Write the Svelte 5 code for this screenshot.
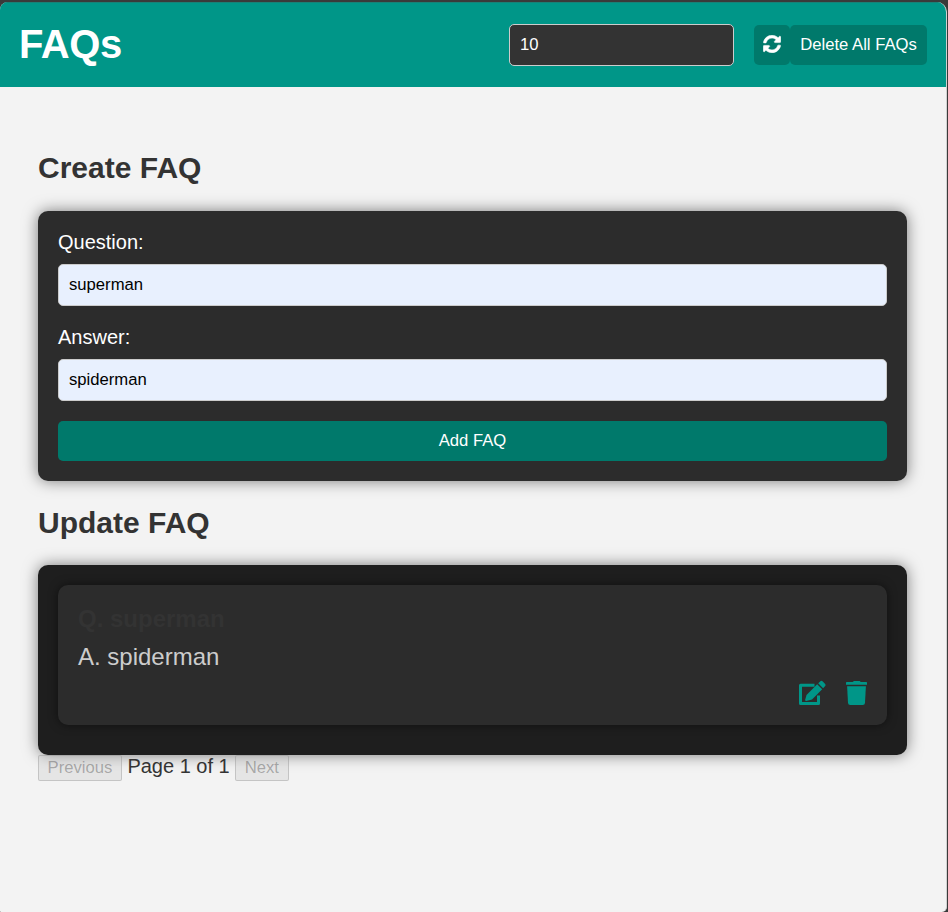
<script>
  let perPage = $state('10');
  let question = $state('superman');
  let answer = $state('spiderman');
  const faqs = [{ question: 'superman', answer: 'spiderman' }];
</script>

<div class="window">
  <header>
    <h1>FAQs</h1>
    <input class="limit" bind:value={perPage} aria-label="FAQs per page" />
    <button class="btn refresh" aria-label="Refresh">
      <svg width="18" height="18" viewBox="0 0 512 512" fill="currentColor" stroke="currentColor" stroke-width="16">
        <path d="M370.7 133.3C339.5 104 298.9 88 255.8 88c-77.5.1-144.3 53.2-162.8 126.9-1.3 5.4-6.1 9.1-11.7 9.1H24.1c-7.5 0-13.2-6.8-11.8-14.2C33.9 94.9 134.8 8 256 8c66.4 0 126.8 26.1 171.3 68.7L463 41C478.1 25.9 504 36.6 504 57.9V192c0 13.3-10.7 24-24 24H345.9c-21.4 0-32.1-25.9-17-41l41.8-41.7zM32 296h134.1c21.4 0 32.1 25.9 17 41l-41.8 41.8c31.3 29.3 71.8 45.3 114.9 45.3 77.4-.1 144.3-53.1 162.8-126.8 1.3-5.4 6.1-9.1 11.7-9.1h57.3c7.5 0 13.2 6.8 11.8 14.2C478.1 417.1 377.2 504 256 504c-66.4 0-126.8-26.1-171.3-68.7L49 471C33.9 486.1 8 475.4 8 454.1V320c0-13.3 10.7-24 24-24z" />
      </svg>
    </button>
    <button class="btn delete">Delete All FAQs</button>
  </header>

  <main>
    <h2>Create FAQ</h2>
    <section class="form">
      <label for="question">Question:</label>
      <input id="question" bind:value={question} />
      <label for="answer">Answer:</label>
      <input id="answer" bind:value={answer} />
      <button class="btn add">Add FAQ</button>
    </section>

    <h2>Update FAQ</h2>
    <section class="list">
      {#each faqs as faq}
        <article>
          <h3>Q. {faq.question}</h3>
          <p>A. {faq.answer}</p>
          <div class="actions">
            <svg width="28" height="26" viewBox="0 0 28 26">
              <path d="M16.5 5.3H2.5V23.5H20.5V15.5" fill="none" stroke="currentColor" stroke-width="3" stroke-linejoin="round" />
              <path d="M19.2 4.2L24.2 9.2L14 19.5L8.3 21Q7.1 21 7.1 20L8.5 14.9Z" fill="currentColor" />
              <path d="M20.2 3.3L22.4 1.2Q23.5.4 24.5 1.2L27.2 3.9Q28 5 27.2 6L25.1 8.2Z" fill="currentColor" />
            </svg>
            <svg width="21" height="26" viewBox="0 0 21 26" fill="currentColor">
              <path d="M.7 2H6.6L8 1H13.7L14.8 2H20.3Q21 2 21 2.7V4.8H0V2.7Q0 2 .7 2Z" />
              <path d="M1.1 6.3H19.9L19 22.7Q18.8 25 16.8 25H4.2Q2.2 25 2 22.7Z" />
            </svg>
          </div>
        </article>
      {/each}
    </section>

    <div class="pager">
      <button disabled>Previous</button>
      <span>Page 1 of 1</span>
      <button disabled>Next</button>
    </div>
  </main>
</div>

<style>
  :global(body) {
    background: #3a3a3a;
  }
  .window,
  .window * {
    box-sizing: border-box;
    font-family: 'Liberation Sans', Arial, sans-serif;
  }
  .window {
    width: 947px;
    height: 910px;
    margin-top: 2px;
    background: #f3f3f3;
    border-right: 1px solid #d2d2d2;
    border-radius: 8px 10px 5px 1px;
    overflow: hidden;
    color: #333;
  }
  svg {
    display: block;
  }
  header {
    display: flex;
    align-items: center;
    width: 947px;
    height: 85px;
    padding: 0 20px 0 19px;
    background: #009688;
    box-shadow: inset 0 1px #188177;
  }
  h1 {
    margin: 0 auto 0 0;
    padding-bottom: 2px;
    font-size: 40px;
    line-height: 46px;
    letter-spacing: -0.4px;
    color: #fff;
  }
  input {
    display: block;
    width: 100%;
    height: 42px;
    padding: 0 10px 1px;
    font-size: 16.67px;
    color: #000;
    background: #e8f0fe;
    border: 1px solid #ccc;
    border-radius: 5px;
    outline: none;
  }
  .limit {
    width: 225px;
    margin-right: 20px;
    padding-bottom: 0;
    color: #fff;
    background: #333;
  }
  .btn {
    height: 40px;
    padding: 0 10px 1px;
    border: 0;
    border-radius: 5px;
    font-size: 16.67px;
    color: #fff;
    background: #00796b;
  }
  .refresh {
    width: 36px;
    padding: 0 9px 2px;
  }
  .delete {
    width: 137px;
    padding-bottom: 0;
    white-space: nowrap;
  }
  main {
    padding: 64px 39px 0 38px;
  }
  h2 {
    margin: 0;
    font-size: 30px;
    line-height: 34px;
  }
  section {
    border-radius: 10px;
    box-shadow: 0 0 15px rgba(0, 0, 0, 0.5);
  }
  .form {
    height: 270px;
    margin: 26px 0 25px;
    padding: 20px;
    background: #2c2c2c;
  }
  label {
    display: block;
    height: 33px;
    font-size: 20px;
    line-height: 23px;
    color: #fff;
  }
  .form input {
    margin-bottom: 20px;
  }
  .add {
    display: block;
    width: 100%;
  }
  .list {
    height: 190px;
    margin-top: 25px;
    padding: 20px;
    background: #1e1e1e;
  }
  article {
    height: 140px;
    padding: 20px;
    border-radius: 10px;
    background: #2c2c2c;
    box-shadow: 0 0 10px rgba(0, 0, 0, 0.5);
  }
  h3,
  p {
    margin: 0;
    font-size: 24px;
    line-height: 28px;
  }
  h3 {
    margin-bottom: 10px;
    color: #333;
  }
  p {
    color: #ccc;
  }
  .actions {
    display: flex;
    justify-content: flex-end;
    gap: 20px;
    margin-top: 9px;
    color: #009688;
  }
  .pager {
    display: flex;
    align-items: flex-start;
    font-size: 20px;
    line-height: 23px;
  }
  .pager span {
    margin: 0 5.4px;
  }
  .pager button {
    height: 26px;
    padding: 0 8.6px;
    border: 1px solid rgba(118, 118, 118, 0.3);
    border-radius: 2px;
    font-size: 16.67px;
    line-height: 24px;
    color: rgba(16, 16, 16, 0.3);
    background: rgba(200, 200, 200, 0.3);
  }
</style>
